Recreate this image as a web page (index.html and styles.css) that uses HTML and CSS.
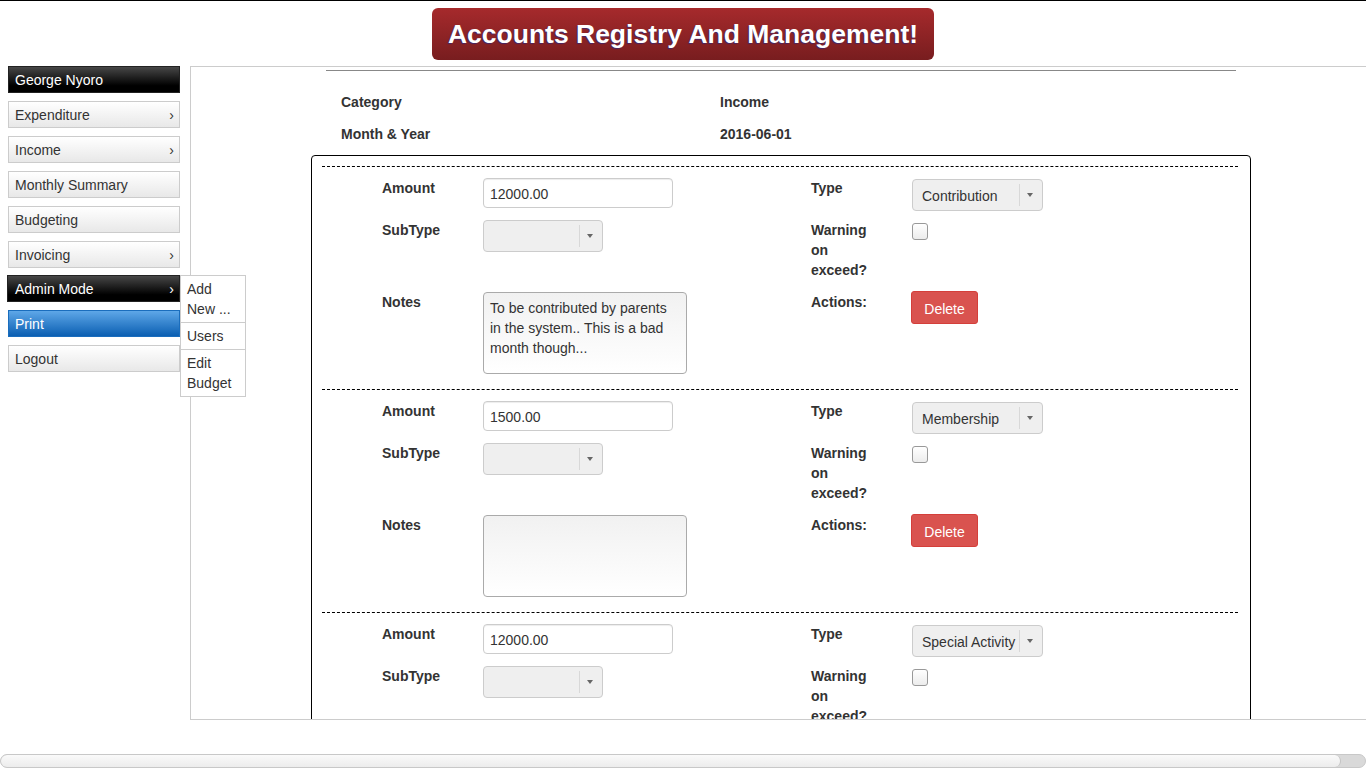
FILE: index.html
```html
<!DOCTYPE html>
<html>
<head>
<meta charset="utf-8">
<title>Accounts Registry And Management</title>
<link rel="stylesheet" href="styles.css">
</head>
<body>
<div class="page">
  <header class="top">
    <h1 class="banner">Accounts Registry And Management!</h1>
  </header>
  <div class="layout">
    <nav class="side">
      <div class="item dark">George Nyoro</div>
      <div class="item">Expenditure<span class="chev">&rsaquo;</span></div>
      <div class="item">Income<span class="chev">&rsaquo;</span></div>
      <div class="item">Monthly Summary</div>
      <div class="item">Budgeting</div>
      <div class="item">Invoicing<span class="chev">&rsaquo;</span></div>
      <div class="item dark admin">Admin Mode<span class="chev">&rsaquo;</span>
        <ul class="submenu">
          <li>Add New ...</li>
          <li>Users</li>
          <li>Edit Budget</li>
        </ul>
      </div>
      <div class="item blue">Print</div>
      <div class="item">Logout</div>
    </nav>
    <main class="panel">
      <div class="wrap">
        <div class="rule"></div>
        <div class="info">
          <div class="k">Category</div><div class="v">Income</div>
          <div class="k">Month &amp; Year</div><div class="v">2016-06-01</div>
        </div>
        <div class="formbox">
          <div class="entry">
            <div class="lbl">Amount</div>
            <div class="fld"><input class="txt" type="text" value="12000.00"></div>
            <div class="lbl">Type</div>
            <div class="fld"><div class="sel wide"><span class="sel-text">Contribution</span><span class="sel-btn"><span class="caret"></span></span></div></div>
            <div class="lbl">SubType</div>
            <div class="fld"><div class="sel narrow"><span class="sel-text"></span><span class="sel-btn"><span class="caret"></span></span></div></div>
            <div class="lbl warn">Warning on exceed?</div>
            <div class="fld"><span class="check"></span></div>
            <div class="lbl">Notes</div>
            <div class="fld"><textarea class="notes">To be contributed by parents in the system.. This is a bad month though...</textarea></div>
            <div class="lbl">Actions:</div>
            <div class="fld"><button class="del" type="button">Delete</button></div>
          </div>
          <div class="entry">
            <div class="lbl">Amount</div>
            <div class="fld"><input class="txt" type="text" value="1500.00"></div>
            <div class="lbl">Type</div>
            <div class="fld"><div class="sel wide"><span class="sel-text">Membership</span><span class="sel-btn"><span class="caret"></span></span></div></div>
            <div class="lbl">SubType</div>
            <div class="fld"><div class="sel narrow"><span class="sel-text"></span><span class="sel-btn"><span class="caret"></span></span></div></div>
            <div class="lbl warn">Warning on exceed?</div>
            <div class="fld"><span class="check"></span></div>
            <div class="lbl">Notes</div>
            <div class="fld"><textarea class="notes"></textarea></div>
            <div class="lbl">Actions:</div>
            <div class="fld"><button class="del" type="button">Delete</button></div>
          </div>
          <div class="entry">
            <div class="lbl">Amount</div>
            <div class="fld"><input class="txt" type="text" value="12000.00"></div>
            <div class="lbl">Type</div>
            <div class="fld"><div class="sel wide"><span class="sel-text">Special Activity</span><span class="sel-btn"><span class="caret"></span></span></div></div>
            <div class="lbl">SubType</div>
            <div class="fld"><div class="sel narrow"><span class="sel-text"></span><span class="sel-btn"><span class="caret"></span></span></div></div>
            <div class="lbl warn">Warning on exceed?</div>
            <div class="fld"><span class="check"></span></div>
            <div class="lbl">Notes</div>
            <div class="fld"><textarea class="notes"></textarea></div>
            <div class="lbl">Actions:</div>
            <div class="fld"><button class="del" type="button">Delete</button></div>
          </div>
        </div>
      </div>
    </main>
  </div>
  <div class="hscroll"><div class="thumb"></div></div>
</div>
</body>
</html>
```

FILE: styles.css
```css
html, body {
  margin: 0;
  padding: 0;
  height: 768px;
  overflow: hidden;
  background: #fff;
}
body {
  font-family: "Liberation Sans", Arial, sans-serif;
  font-size: 14px;
  color: #333;
}
.page {
  border-top: 1px solid #000;
}
.top {
  padding-top: 7px;
  display: flex;
  justify-content: center;
}
.banner {
  margin: 0;
  width: 502px;
  height: 52px;
  box-sizing: border-box;
  border-radius: 6px;
  background: linear-gradient(#a62a2c, #781d1f);
  color: #fff;
  font-size: 26.5px;
  font-weight: bold;
  line-height: 53px;
  text-align: center;
  text-shadow: -1px 1px 1px rgba(50, 40, 120, 0.75);
}
.layout {
  display: flex;
  margin-top: 6px;
}
.side {
  width: 172px;
  margin-left: 8px;
  flex: none;
}
.item {
  position: relative;
  box-sizing: border-box;
  height: 27px;
  line-height: 25px;
  padding: 1px 6px 0;
  border: 1px solid #ccc;
  background: linear-gradient(#ffffff, #e8e8e8);
  margin-bottom: 8px;
  font-size: 14px;
  color: #333;
  white-space: nowrap;
}
.chev {
  position: absolute;
  right: 5px;
  top: 1px;
  font-size: 14px;
}
.item.dark {
  border-color: #222;
  background: linear-gradient(#474747, #000 75%);
  color: #fff;
}
.item.admin {
  margin-left: -1px;
  margin-top: -1px;
  margin-bottom: 8px;
  height: 27px;
  padding-top: 1px;
  padding-left: 7px;
}
.item.blue {
  border-color: #1a6dbd;
  background: linear-gradient(#5ea7e8, #0b5fb2);
  color: #fff;
}
.submenu {
  position: absolute;
  left: 172px;
  top: -1px;
  z-index: 5;
  margin: 0;
  padding: 0;
  list-style: none;
  width: 66px;
  box-sizing: border-box;
  border: 1px solid #ccc;
  background: #fff;
  white-space: normal;
  line-height: 20px;
}
.submenu li {
  padding: 3px 10px 3px 6px;
  line-height: 20px;
  color: #333;
  font-size: 14px;
}
.submenu li + li {
  border-top: 1px solid #ccc;
}
.panel {
  flex: 1;
  margin-left: 10px;
  height: 654px;
  box-sizing: border-box;
  border: 1px solid #ccc;
  border-right: none;
  overflow: hidden;
}
.wrap {
  margin-left: 120px;
  width: 940px;
}
.rule {
  margin: 3px 0 0 15px;
  width: 910px;
  border-top: 1px solid #888;
}
.info {
  display: grid;
  grid-template-columns: 379px auto;
  row-gap: 12px;
  padding-left: 30px;
  margin-top: 21px;
  font-weight: bold;
  line-height: 20px;
}
.formbox {
  margin-top: 11px;
  border: 1px solid #000;
  border-radius: 4px;
  padding: 10px 12px 0 10px;
}
.entry {
  border-top: 1px dashed #000;
  display: grid;
  grid-template-columns: 101px 328px 101px 1fr;
  grid-template-rows: 42px 72px 82px;
  padding: 11px 0 15px 60px;
}
.lbl {
  font-weight: bold;
  line-height: 20px;
  color: #333;
}
.lbl.warn {
  width: 62px;
}
.txt {
  display: block;
  width: 190px;
  height: 30px;
  box-sizing: border-box;
  margin: 0;
  border: 1px solid #ccc;
  border-radius: 4px;
  padding: 2px 6px 0;
  font-family: "Liberation Sans", Arial, sans-serif;
  font-size: 14px;
  color: #333;
  box-shadow: inset 0 1px 1px rgba(0, 0, 0, 0.075);
  outline: none;
}
.sel {
  display: flex;
  height: 32px;
  box-sizing: border-box;
  border: 1px solid #ccc;
  border-radius: 4px;
  background: #efefef;
}
.wide {
  width: 131px;
  margin-top: 1px;
}
.narrow {
  width: 120px;
}
.sel-text {
  flex: 1;
  padding: 1px 0 0 9px;
  line-height: 30px;
  white-space: nowrap;
  overflow: hidden;
  color: #333;
}
.sel-btn {
  width: 22px;
  margin: 4px 0;
  border-left: 1px solid #d8d8d8;
  display: flex;
  align-items: center;
  justify-content: center;
}
.caret {
  width: 0;
  height: 0;
  margin-right: 3px;
  border-top: 4px solid #666;
  border-left: 3px solid transparent;
  border-right: 3px solid transparent;
}
.check {
  display: block;
  margin-top: 3px;
  width: 16px;
  height: 17px;
  box-sizing: border-box;
  border: 1px solid #999;
  border-radius: 3px;
  background: linear-gradient(#ffffff, #ececec);
}
.notes {
  display: block;
  width: 204px;
  height: 82px;
  box-sizing: border-box;
  margin: 0;
  border: 1px solid #aaa;
  border-radius: 4px;
  padding: 5px 6px;
  background: linear-gradient(#f1f1f1, #ffffff);
  font-family: "Liberation Sans", Arial, sans-serif;
  font-size: 14px;
  line-height: 20px;
  color: #333;
  resize: none;
  overflow: hidden;
  outline: none;
}
.del {
  display: block;
  margin: -1px 0 0 -1px;
  width: 67px;
  height: 33px;
  box-sizing: border-box;
  border: 1px solid #d43f3a;
  border-radius: 3px;
  background: #d9534f;
  color: #fff;
  font-family: "Liberation Sans", Arial, sans-serif;
  font-size: 14px;
  padding: 2px 0 0;
}
.hscroll {
  margin-top: 34px;
  height: 14px;
  box-sizing: border-box;
  border: 1px solid #c8c8c8;
  border-radius: 7px;
  background: #d9d9d9;
  overflow: hidden;
}
.thumb {
  width: 1340px;
  height: 12px;
  box-sizing: border-box;
  border-right: 1px solid #c4c4c4;
  border-radius: 6px;
  background: linear-gradient(#fafafa, #ececec);
}
```
